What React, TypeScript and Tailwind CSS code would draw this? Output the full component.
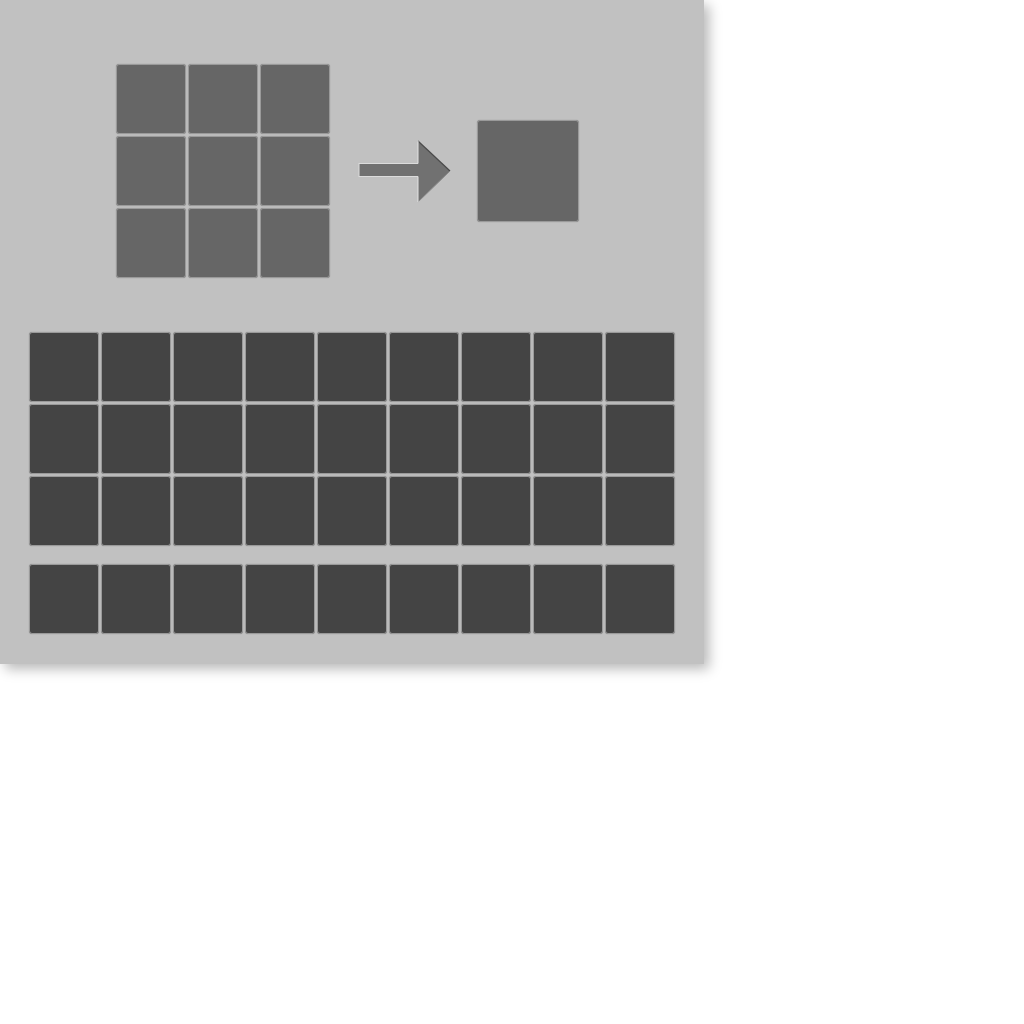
import React from 'react';

const slot = (tone: string, size = 'w-[70px] h-[70px]') =>
  `${size} ${tone} rounded-[3px] border border-[#9a9a9a] shadow-[0_0_1px_rgba(0,0,0,0.35)]`;

function Arrow() {
  return (
    <svg width="94" height="64" viewBox="0 0 94 64" className="block">
      <rect x="1" y="23.5" width="60" height="13" fill="#717171" stroke="#dcdcdc" strokeWidth="1" />
      <polygon points="60,1 92,31 60,62" fill="#717171" />
      <polyline points="60,1 92,31" fill="none" stroke="#4a4a4a" strokeWidth="1.2" />
      <polyline points="92,31 60,62" fill="none" stroke="#8a8a8a" strokeWidth="1" />
      <line x1="60" y1="1" x2="60" y2="23.5" stroke="#e2e2e2" strokeWidth="1" />
      <line x1="60" y1="36.5" x2="60" y2="62" stroke="#e2e2e2" strokeWidth="1" />
    </svg>
  );
}

export default function App() {
  const craft = Array.from({ length: 9 });
  const inv = Array.from({ length: 27 });
  const hotbar = Array.from({ length: 9 });

  return (
    <div className="w-[1024px] h-[1024px] bg-white">
      <div className="w-[704px] h-[664px] bg-[#c1c1c1] shadow-[5px_5px_12px_rgba(0,0,0,0.28)] flex flex-col">
        {/* Crafting area */}
        <div className="flex items-center pt-[64px] pl-[116px]">
          <div className="grid grid-cols-3 gap-[2px]">
            {craft.map((_, i) => (
              <div key={`c-${i}`} className={slot('bg-[#666666]')} />
            ))}
          </div>
          <div className="ml-[28px] mt-[2px]">
            <Arrow />
          </div>
          <div className={`ml-[25px] ${slot('bg-[#666666]', 'w-[102px] h-[102px]')}`} />
        </div>

        {/* Inventory */}
        <div className="grid grid-cols-9 gap-[2px] w-fit ml-[29px] mt-[54px]">
          {inv.map((_, i) => (
            <div key={`i-${i}`} className={slot('bg-[#444444]')} />
          ))}
        </div>

        {/* Hotbar */}
        <div className="grid grid-cols-9 gap-[2px] w-fit ml-[29px] mt-[18px]">
          {hotbar.map((_, i) => (
            <div key={`h-${i}`} className={slot('bg-[#444444]')} />
          ))}
        </div>
      </div>
    </div>
  );
}
